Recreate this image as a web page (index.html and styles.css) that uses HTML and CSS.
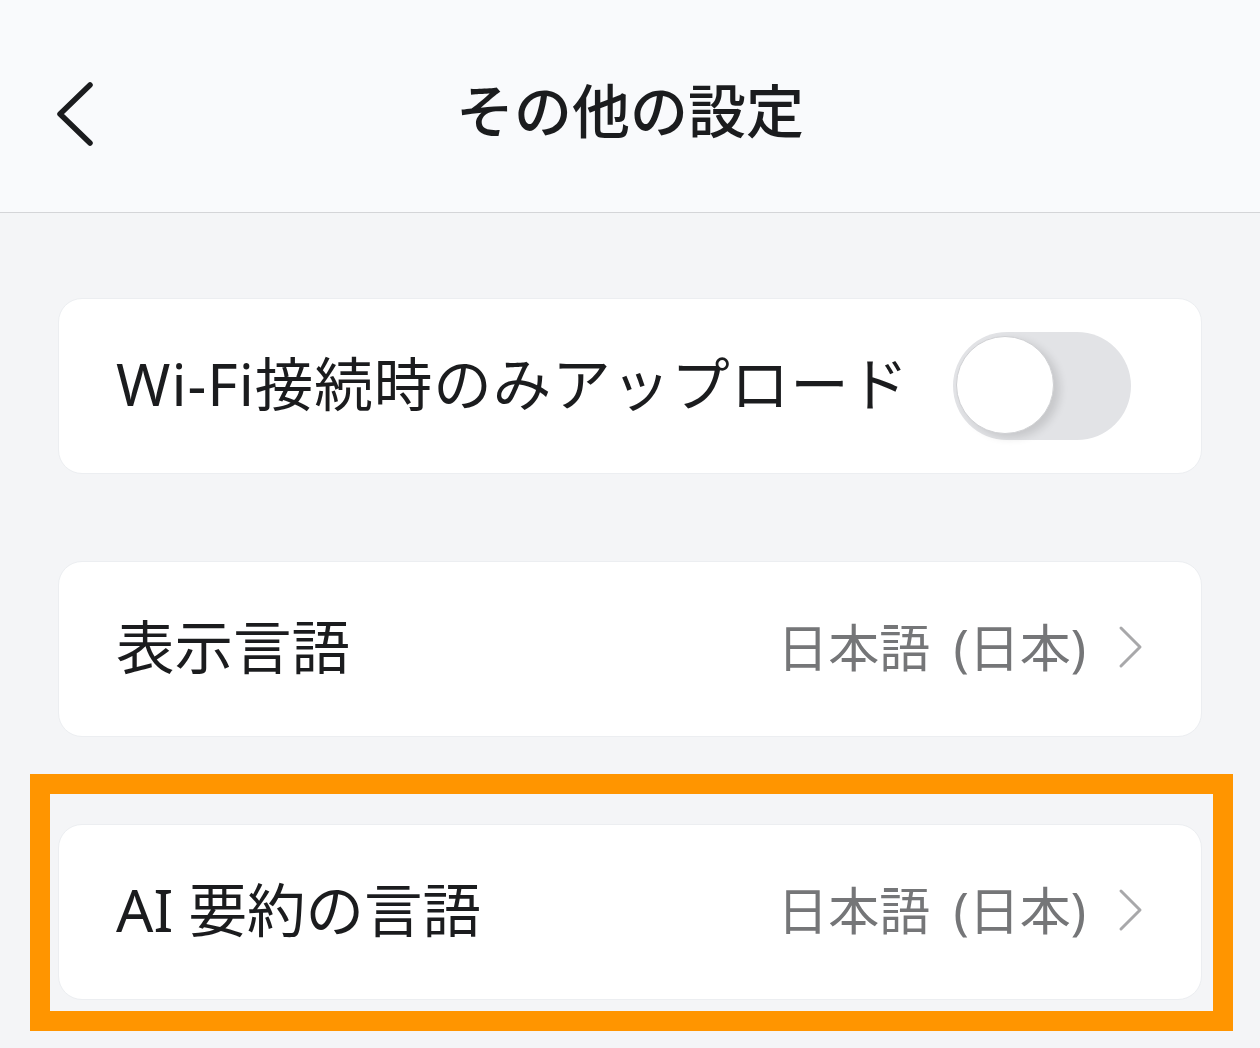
FILE: index.html
```html
<!DOCTYPE html>
<html lang="ja">
<head>
<meta charset="utf-8">
<title>その他の設定</title>
<link rel="stylesheet" href="styles.css">
</head>
<body>
<div class="page">
  <header class="header">
    <button class="back" aria-label="戻る">
      <svg width="40" height="68" viewBox="0 0 40 68"><path d="M34 4 L4 33 L34 62" fill="none" stroke="#1b1c1e" stroke-width="5.5" stroke-linecap="round" stroke-linejoin="round"/></svg>
    </button>
    <h1 class="title">その他の設定</h1>
  </header>
  <main class="list">
    <section class="card">
      <span class="label wide">Wi-Fi接続時のみアップロード</span>
      <span class="toggle"><span class="knob"></span></span>
    </section>
    <section class="card link">
      <span class="label">表示言語</span>
      <span class="value">日本語 (日本)
        <svg class="chev" width="26" height="44" viewBox="0 0 26 44"><path d="M3 3 L22 22 L3 41" fill="none" stroke="#a8a8aa" stroke-width="3" stroke-linecap="round" stroke-linejoin="round"/></svg>
      </span>
    </section>
    <section class="card link">
      <span class="label">AI 要約の言語</span>
      <span class="value">日本語 (日本)
        <svg class="chev" width="26" height="44" viewBox="0 0 26 44"><path d="M3 3 L22 22 L3 41" fill="none" stroke="#a8a8aa" stroke-width="3" stroke-linecap="round" stroke-linejoin="round"/></svg>
      </span>
    </section>
  </main>
  <div class="highlight"></div>
</div>
</body>
</html>
```
FILE: styles.css
```css
html, body {
  margin: 0;
  padding: 0;
}
body {
  background: #f4f5f7;
  font-family: "Noto Sans", "Noto Sans CJK JP", sans-serif;
  color: #1b1c1e;
  width: 1260px;
  height: 1048px;
  overflow: hidden;
}
.page {
  position: relative;
  height: 1048px;
}
.header {
  height: 212px;
  background: #f9fafc;
  border-bottom: 1.5px solid #d4d5d8;
  display: flex;
  align-items: center;
  justify-content: center;
  position: relative;
}
.back {
  position: absolute;
  left: 56px;
  top: 81px;
  border: 0;
  background: none;
  padding: 0;
  display: block;
}
.back svg { display: block; }
.title {
  margin: 10px 0 0 0;
  font-size: 58px;
  font-weight: 500;
  line-height: 1;
}
.list {
  padding: 85px 58px 0;
  display: flex;
  flex-direction: column;
  gap: 87px;
}
.card {
  height: 176px;
  box-sizing: border-box;
  background: #ffffff;
  border: 1px solid #eceef1;
  border-radius: 24px;
  display: flex;
  align-items: center;
  justify-content: space-between;
  padding: 0 70px 0 57px;
}
.card.link {
  padding-right: 57px;
}
.label {
  font-size: 58.5px;
  line-height: 1;
  color: #1b1c1e;
  padding-bottom: 6px;
}
.label.wide {
  letter-spacing: 1px;
}
.value {
  font-size: 51px;
  color: #757678;
  display: flex;
  align-items: center;
  line-height: 1;
  padding-bottom: 4px;
  word-spacing: 10px;
}
.chev {
  display: block;
  margin-left: 32px;
}
.toggle {
  width: 178px;
  height: 108px;
  border-radius: 54px;
  background: #e2e3e6;
  position: relative;
  flex: none;
}
.knob {
  position: absolute;
  left: 3px;
  top: 4px;
  width: 98px;
  height: 98px;
  border-radius: 50%;
  background: #ffffff;
  border: 1.5px solid #cfd0d3;
  box-sizing: border-box;
  box-shadow: 6px 4px 8px rgba(0, 0, 0, 0.12);
}
.highlight {
  position: absolute;
  left: 30px;
  top: 774px;
  width: 1203px;
  height: 257px;
  box-sizing: border-box;
  border: 20px solid #ff9500;
  pointer-events: none;
}
```
